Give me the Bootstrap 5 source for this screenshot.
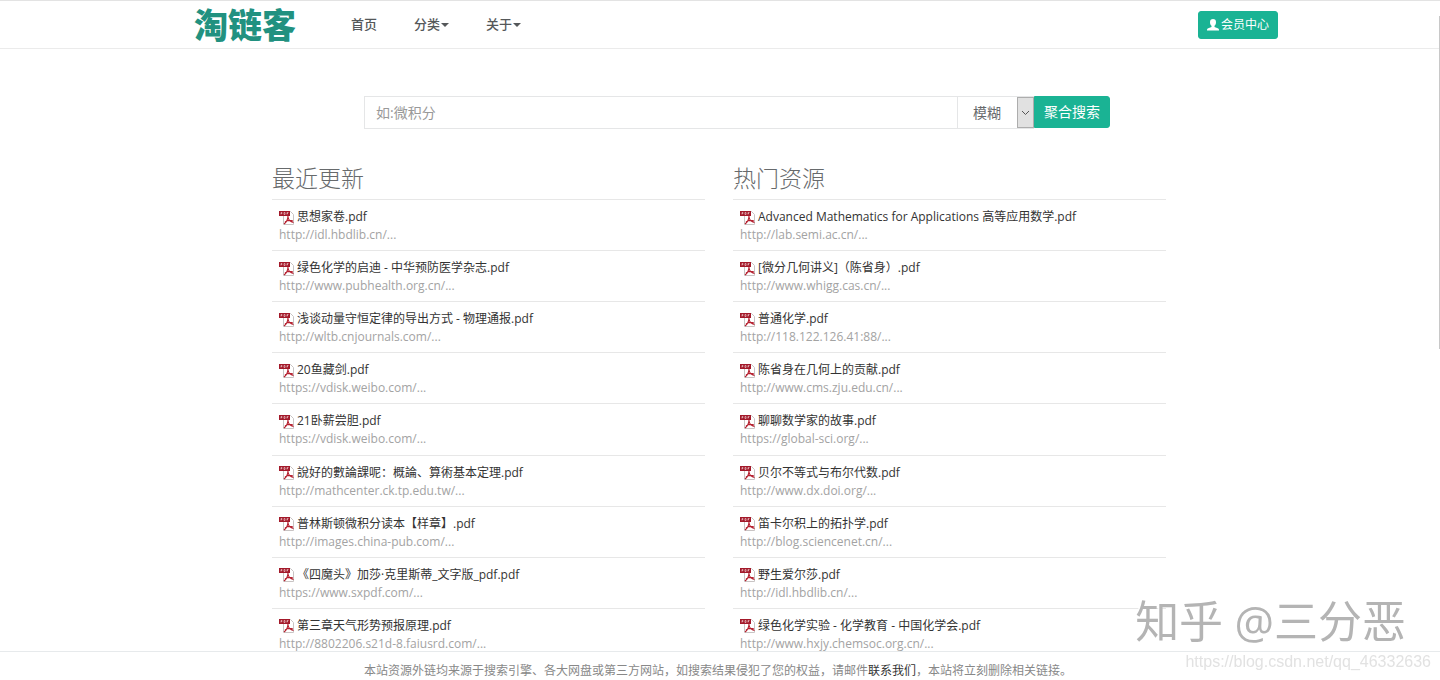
<!DOCTYPE html>
<html lang="zh-CN">
<head>
<meta charset="utf-8">
<meta name="viewport" content="width=device-width, initial-scale=1">
<title>淘链客</title>
<link href="https://cdn.jsdelivr.net/npm/bootstrap@5.3.0/dist/css/bootstrap.min.css" rel="stylesheet">
<style>
  body { font-family: "Open Sans", "Noto Sans CJK SC", sans-serif; font-size: 12px; line-height: 18px; color: #676a6c; background: #fff; }
  a { color: #333; text-decoration: none; }
  .site-nav { border-top: 1px solid #e3e3e3; border-bottom: 1px solid #ebebeb; height: 49px; }
  .site-nav { padding-left: 32px; }
  .search-row { padding: 47px 0 0 34px; }
  .nav-wrap { max-width: 1108px; }
  .brand { font-size: 34px; line-height: 40px; font-weight: 900; color: #219180; }
  .brand:hover { color: #219180; }
  .menu { gap: 37px; margin: 0 0 2px 55px; }
  .menu .nav-link { padding: 0; font-size: 13px; font-weight: 500; color: #55585a; }
  .menu .dropdown-toggle::after { margin-left: 1px; vertical-align: 2px; border-width: 4px 4px 0; }
  .btn-teal { background: #1ab394; color: #fff; border: 1px solid #1ab394; border-radius: 3px; }
  .btn-teal:hover { background: #18a689; color: #fff; }
  .btn-member { font-size: 12px; line-height: 18px; padding: 4px 8px; gap: 2px; }
  .search-wrap { max-width: 746px; }
  .search-wrap .form-control, .mode-select { height: 33px; border: 1px solid #e5e6e7; border-radius: 0; font-size: 14px; color: #676a6c; }
  .search-wrap .form-control { padding: 4px 11px; }
  .search-wrap .form-control::placeholder { color: #999; }
  .mode-box { position: relative; width: 77px; margin-left: -1px; }
  .mode-select { width: 100%; appearance: none; background: #fff; padding: 0 15px; }
  .mode-arrow { position: absolute; top: 1px; right: 0; bottom: 1px; width: 17px; background: #e1e1e1; border: 1px solid #adadad; pointer-events: none; }
  .btn-search { font-size: 14px; line-height: 20px; height: 32px; padding: 0 9px; border-radius: 0 3px 3px 0; }
  .lists-row { padding: 34px 2px 0 0; }
  .lists { max-width: 894px; }
  .lists .row { --bs-gutter-x: 28px; }
  .list-title { font-size: 23px; line-height: 30px; font-weight: 300; margin: 0 0 6px; }
  .doc-list { display: grid; grid-auto-rows: 1fr; min-height: 460px; margin: 0; }
  .doc-list li { border-top: 1px solid #e7e7e7; padding: 8px 7px 0; }
  .doc-name { display: flex; align-items: center; gap: 2px; white-space: nowrap; }
  .doc-name svg { margin-top: 1px; }
  .doc-url { color: #a3a3a3; white-space: nowrap; display: block; line-height: 17px; }
  .site-foot { background: #fff; border-top: 1px solid #e7eaec; padding: 10px 4px 0 0; color: #888; }
  .page-thumb { position: fixed; top: 16px; right: 0; width: 1px; height: 49vh; background: #c8c8c8; }
  .mark-author { position: fixed; right: 34px; bottom: 32px; font-size: 44px; line-height: 54px; color: #b4b4b4; text-shadow: -1px -1px #fff; z-index: 1040; pointer-events: none; }
  .mark-blog { position: fixed; right: 9px; bottom: 9px; font: 16px/18px "Liberation Sans", sans-serif; color: #e2e2e2; z-index: 1040; pointer-events: none; }
</style>
</head>
<body>
<svg width="0" height="0" class="position-absolute" aria-hidden="true">
  <symbol id="pdf" viewBox="0 0 16 16">
    <path d="M4.500 1.500h7l3 3v10h-10z" fill="#fff" stroke="#c9c4c4"/>
    <path d="M0 1h11v5H0z" fill="#a3192a"/>
    <path d="M2 4.500V2.500h1v1H2M5 4.500v-2h1v2zM8 4.500v-2h1.500M8 3.500h1" fill="none" stroke="#e9c3c6" stroke-width=".7"/>
    <path d="M9 6c0 3-1.500 6-4 8M9 7c.5 3 2.500 5 5.500 5.500M6 12c2-1.500 5-2 8-1" fill="none" stroke="#b5202f" stroke-width="1.200"/>
  </symbol>
</svg>
<nav class="site-nav d-flex">
  <div class="nav-wrap container-fluid d-flex align-items-center">
    <a class="brand" href="#">淘链客</a>
    <ul class="menu nav">
      <li class="nav-item"><a class="nav-link" href="#">首页</a></li>
      <li class="nav-item dropdown"><a class="nav-link dropdown-toggle" href="#" data-bs-toggle="dropdown">分类</a></li>
      <li class="nav-item dropdown"><a class="nav-link dropdown-toggle" href="#" data-bs-toggle="dropdown">关于</a></li>
    </ul>
    <button type="button" class="btn btn-teal btn-member ms-auto d-flex align-items-center">
      <svg width="12" height="12" viewBox="0 0 12 12" fill="#fff" aria-hidden="true"><path d="M6 0c2 0 3 1.200 3 3.200C9 5 8.300 6 7.500 6.700v1.200c1.500.7 4 1.200 4.300 2.200.2.500.2 1 .2 1.500H0c0-.5 0-1 .2-1.500.3-1 2.800-1.500 4.300-2.200V6.700C3.700 6 3 5 3 3.200 3 1.200 4 0 6 0z"/></svg>会员中心</button>
  </div>
</nav>
<main>
  <div class="search-row">
    <form class="search-wrap d-flex mx-auto">
      <input class="form-control flex-grow-1" type="text" placeholder="如:微积分" aria-label="关键词">
      <div class="mode-box flex-shrink-0">
        <select class="mode-select" aria-label="匹配方式"><option>模糊</option><option>精确</option></select>
        <span class="mode-arrow d-flex align-items-center justify-content-center"><svg width="9" height="9" viewBox="0 0 9 9" fill="none" stroke="#555"><path d="M1 3l3.500 3.500L8 3"/></svg></span>
      </div>
      <button type="button" class="btn btn-teal btn-search flex-shrink-0">聚合搜索</button>
    </form>
  </div>
  <div class="lists-row">
    <div class="lists container-fluid px-0">
      <div class="row" id="columns"></div>
    </div>
  </div>
</main>
<footer class="site-foot fixed-bottom text-center">本站资源外链均来源于搜索引擎、各大网盘或第三方网站，如搜索结果侵犯了您的权益，请邮件<a href="#">联系我们</a>，本站将立刻删除相关链接。</footer>
<div class="page-thumb"></div>
<div class="mark-author">知乎 @三分恶</div>
<div class="mark-blog">https://blog.csdn.net/qq_46332636</div>
<script src="https://cdn.jsdelivr.net/npm/bootstrap@5.3.0/dist/js/bootstrap.bundle.min.js"></script>
<script>
  const data = [
    ["最近更新", [
      ["思想家卷.pdf", "http://idl.hbdlib.cn/..."],
      ["绿色化学的启迪 - 中华预防医学杂志.pdf", "http://www.pubhealth.org.cn/..."],
      ["浅谈动量守恒定律的导出方式 - 物理通报.pdf", "http://wltb.cnjournals.com/..."],
      ["20鱼藏剑.pdf", "https://vdisk.weibo.com/..."],
      ["21卧薪尝胆.pdf", "https://vdisk.weibo.com/..."],
      ["說好的數論課呢：概論、算術基本定理.pdf", "http://mathcenter.ck.tp.edu.tw/..."],
      ["普林斯顿微积分读本【样章】.pdf", "http://images.china-pub.com/..."],
      ["《四魔头》加莎·克里斯蒂_文字版_pdf.pdf", "https://www.sxpdf.com/..."],
      ["第三章天气形势预报原理.pdf", "http://8802206.s21d-8.faiusrd.com/..."]
    ]],
    ["热门资源", [
      ["Advanced Mathematics for Applications 高等应用数学.pdf", "http://lab.semi.ac.cn/..."],
      ["[微分几何讲义]（陈省身）.pdf", "http://www.whigg.cas.cn/..."],
      ["普通化学.pdf", "http://118.122.126.41:88/..."],
      ["陈省身在几何上的贡献.pdf", "http://www.cms.zju.edu.cn/..."],
      ["聊聊数学家的故事.pdf", "https://global-sci.org/..."],
      ["贝尔不等式与布尔代数.pdf", "http://www.dx.doi.org/..."],
      ["笛卡尔积上的拓扑学.pdf", "http://blog.sciencenet.cn/..."],
      ["野生爱尔莎.pdf", "http://idl.hbdlib.cn/..."],
      ["绿色化学实验 - 化学教育 - 中国化学会.pdf", "http://www.hxjy.chemsoc.org.cn/..."]
    ]]
  ];
  document.getElementById("columns").innerHTML = data.map(([title, docs]) => `
    <section class="col-6">
      <h2 class="list-title">${title}</h2>
      <ul class="doc-list list-unstyled">${docs.map(([name, url]) => `
        <li><a class="doc-name" href="#"><svg width="16" height="16" aria-hidden="true"><use href="#pdf"/></svg>${name}</a><span class="doc-url">${url}</span></li>`).join("")}
      </ul>
    </section>`).join("");
</script>
</body>
</html>
